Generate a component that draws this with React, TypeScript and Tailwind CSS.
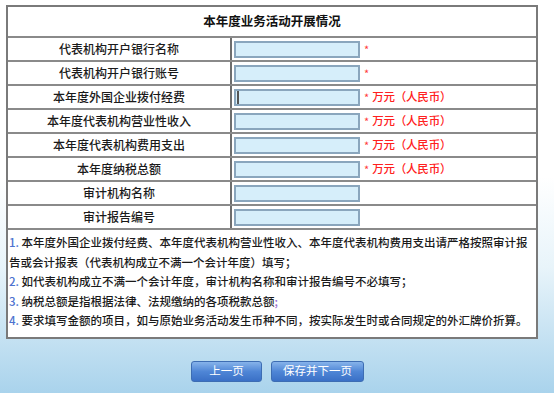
import React from "react";

const font = '"Noto Sans CJK SC", "Noto Sans", sans-serif';

type Row = { label: string; unit?: boolean; star?: boolean; input?: boolean; caret?: boolean };

const rows: Row[] = [
  { label: "代表机构开户银行名称", star: true },
  { label: "代表机构开户银行账号", star: true },
  { label: "本年度外国企业拨付经费", star: true, unit: true, caret: true },
  { label: "本年度代表机构营业性收入", star: true, unit: true },
  { label: "本年度代表机构费用支出", star: true, unit: true },
  { label: "本年度纳税总额", star: true, unit: true },
  { label: "审计机构名称" },
  { label: "审计报告编号" },
];

function Num({ n }: { n: string }) {
  return <span className="text-[#4d72cf]">{n}</span>;
}

export default function App() {
  return (
    <div
      className="w-[554px] h-[393px] overflow-hidden bg-[linear-gradient(to_bottom,#ffffff_0%,#ffffff_45%,#e8f4fa_68%,#a9d3ec_100%)] text-[#1a1a1a]"
      style={{ fontFamily: font }}
    >
      <div className="pt-[5px] pl-[6px]">
        <div className="w-[532px] border-2 border-[#7a7a7a] bg-white">
          <div className="h-[29px] flex items-center justify-center text-[12.5px] font-bold text-[#111]">
            本年度业务活动开展情况
          </div>
          {rows.map((r, i) => (
            <div key={i} className="h-[24px] border-t-2 border-[#8a8a8a] grid grid-cols-[224px_1fr]">
              <div className="flex items-center justify-center text-[12px] font-medium border-r-2 border-[#6e6e6e] leading-none">
                {r.label}
              </div>
              <div className="flex items-center pl-[2px]">
                <div className="relative w-[126px] h-[17px] border-2 border-[#8aa6bd] bg-[#d6eefa]">
                  {r.caret && <div className="absolute left-[1px] top-0 bottom-0 w-[2px] bg-[#555]" />}
                </div>
                {r.star && <span className="ml-[4px] text-[11px] text-[#ff3b3b] leading-none">*</span>}
                {r.unit && (
                  <span className="ml-[3px] text-[11.5px] font-medium text-[#ff2020] leading-none tracking-[-0.2px]">
                    万元（人民币）
                  </span>
                )}
              </div>
            </div>
          ))}
          <div className="border-t-2 border-[#8a8a8a] pt-[3px] pb-[6px] pl-[1px] text-[11.5px] font-medium leading-[19.5px] whitespace-nowrap">
            <div>
              <Num n="1." /> 本年度外国企业拨付经费、本年度代表机构营业性收入、本年度代表机构费用支出请严格按照审计报
            </div>
            <div>告或会计报表（代表机构成立不满一个会计年度）填写；</div>
            <div>
              <Num n="2." /> 如代表机构成立不满一个会计年度，审计机构名称和审计报告编号不必填写；
            </div>
            <div>
              <Num n="3." /> 纳税总额是指根据法律、法规缴纳的各项税款总额<span className="text-[#9a6fd0]">;</span>
            </div>
            <div>
              <Num n="4." /> 要求填写金额的项目，如与原始业务活动发生币种不同，按实际发生时或合同规定的外汇牌价折算。
            </div>
          </div>
        </div>
      </div>
      <div className="mt-[22px] flex justify-center gap-[9px] pl-[1px]">
        <button className="w-[71px] h-[21px] rounded-[3px] border border-[#3d6db3] bg-[linear-gradient(to_bottom,#86b3ea,#4f86d6_50%,#3a70c6)] text-white text-[11.5px] leading-none">
          上一页
        </button>
        <button className="w-[93px] h-[21px] rounded-[3px] border border-[#3d6db3] bg-[linear-gradient(to_bottom,#86b3ea,#4f86d6_50%,#3a70c6)] text-white text-[11.5px] leading-none">
          保存并下一页
        </button>
      </div>
    </div>
  );
}
